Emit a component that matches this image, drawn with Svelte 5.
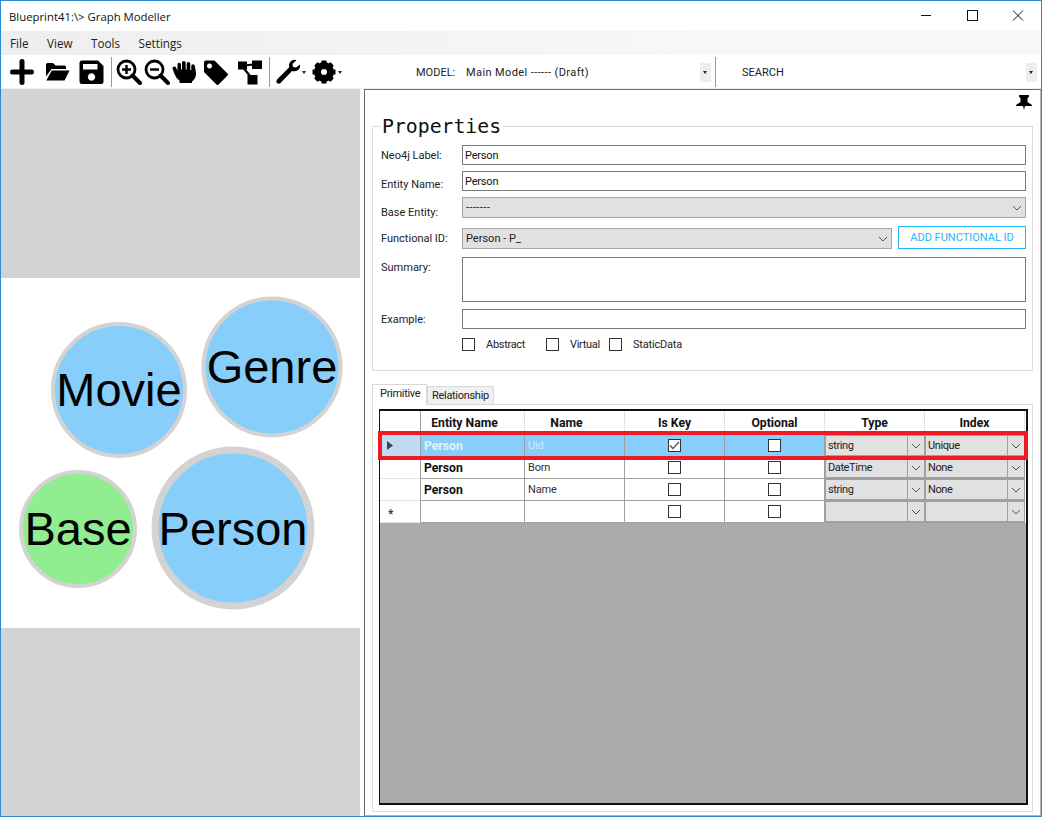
<script>
  const circles = [
    { cx: 119, cy: 112, r: 66, sw: 4, fill: '#87cefa', label: 'Movie', ty: 128 },
    { cx: 272, cy: 89, r: 68.5, sw: 4, fill: '#87cefa', label: 'Genre', ty: 105 },
    { cx: 78, cy: 251, r: 57, sw: 4, fill: '#90ee90', label: 'Base', ty: 267 },
    { cx: 233, cy: 250, r: 78, sw: 7, fill: '#87cefa', label: 'Person', ty: 267 }
  ];
  const rows = [
    { name: 'Uid', key: true, type: 'string', index: 'Unique', sel: true, ent: 'Person' },
    { name: 'Born', key: false, type: 'DateTime', index: 'None', ent: 'Person' },
    { name: 'Name', key: false, type: 'string', index: 'None', ent: 'Person' },
    { name: '', key: false, type: '', index: '', ent: '', add: true }
  ];
  const teeth = [0, 45, 90, 135, 180, 225, 270, 315];
</script>

{#snippet chevron()}
  <svg class="chev" width="10" height="6" viewBox="0 0 10 6"><path d="M1 1l4 4 4-4" fill="none" stroke="#555" stroke-width="1"/></svg>
{/snippet}

{#snippet check(on)}
  <span class="check">
    {#if on}<svg width="11" height="9" viewBox="0 0 11 9"><path d="M1 4.500l3 3 6-6.500" fill="none" stroke="#555" stroke-width="1.400"/></svg>{/if}
  </span>
{/snippet}

<div class="window">
  <header class="title">
    <span class="title-text">Blueprint41:\&gt; Graph Modeller</span>
    <div class="controls">
      <svg width="46" height="30" viewBox="0 0 46 30"><path d="M18 14.500h10" stroke="#111" fill="none"/></svg>
      <svg width="46" height="30" viewBox="0 0 46 30"><rect x="18.500" y="9.500" width="10" height="10" stroke="#111" fill="none"/></svg>
      <svg width="46" height="30" viewBox="0 0 46 30"><path d="M18 9.500l10 10M28 9.500l-10 10" stroke="#111" fill="none"/></svg>
    </div>
  </header>

  <nav class="menu">
    <span>File</span><span>View</span><span>Tools</span><span>Settings</span>
  </nav>

  <div class="toolbar">
    <div class="tools">
      <svg class="ic i-plus" width="26" height="26" viewBox="0 0 26 26"><path d="M12 2.500v21M2.500 13h19" stroke="#000" stroke-width="5" stroke-linecap="round"/></svg>
      <svg class="ic i-open" width="25" height="26" viewBox="0 0 25 26"><path d="M1 5.500Q1 4 2.500 4H8l2.500 2.500H19.500Q21 6.500 21 8V10H6.500L1 17.500ZM6.800 11.500H24.500L19.500 21.500H1.200Z" fill="#000"/></svg>
      <svg class="ic i-save" width="25" height="26" viewBox="0 0 25 26"><path fill-rule="evenodd" d="M3 1.500H19L24.500 7V22.500Q24.500 25 22 25H3Q.5 25 .5 22.500V4Q.5 1.500 3 1.500ZM4 5V10.500H18.500V5ZM12.500 14.300a3.700 3.700 0 1 0 .01 0Z" fill="#000"/></svg>
      <i class="tsep first"></i>
      <svg class="ic i-zin" width="26" height="26" viewBox="0 0 26 26"><circle cx="10.500" cy="10.500" r="8.500" fill="none" stroke="#000" stroke-width="2.800"/><path d="M16.500 16.500L24 24" stroke="#000" stroke-width="4" stroke-linecap="round"/><path d="M10.500 6v9M6 10.500h9" stroke="#000" stroke-width="2.400"/></svg>
      <svg class="ic i-zout" width="26" height="26" viewBox="0 0 26 26"><circle cx="10.500" cy="10.500" r="8.500" fill="none" stroke="#000" stroke-width="2.800"/><path d="M16.500 16.500L24 24" stroke="#000" stroke-width="4" stroke-linecap="round"/><path d="M6 10.500h9" stroke="#000" stroke-width="2.400"/></svg>
      <svg class="ic i-hand" width="25" height="26" viewBox="0 0 25 26"><path d="M.5 9.500Q.5 7.500 2.300 7.500T4.500 9.500L5.500 11.500V5.500Q5.500 3.800 7.200 3.800T9 5.500V10.500H10V3.800Q10 2 11.800 2T13.700 3.800V10.500H14.700V4.800Q14.700 3 16.500 3T18.300 4.800V11H19.300V7Q19.300 5.300 21 5.300T22.800 7L24 13.500Q24.500 19 20 22.500V24H7.500V21.500Q4 19.500 2.500 15Z" fill="#000"/></svg>
      <svg class="ic i-tag" width="26" height="26" viewBox="0 0 26 26"><path fill-rule="evenodd" d="M1 3.500Q1 1.500 3 1.500H11.500L24.500 14.500Q25.500 15.500 24.500 16.500L15.500 25.500Q14.500 26.500 13.500 25.500L1 13ZM6.500 4.500a2.500 2.500 0 1 0 .01 0Z" fill="#000"/></svg>
      <svg class="ic i-graph" width="26" height="26" viewBox="0 0 26 26"><path d="M1 2.500h9v8H1ZM15 1.500h10v8.500H15ZM10.500 16h10v9.500h-10Z" fill="#000"/><path d="M8 6.500L16 5.500M6.500 9L13 17" stroke="#000" stroke-width="2.200" fill="none"/></svg>
      <i class="tsep second"></i>
      <svg class="ic i-wrench" width="26" height="26" viewBox="0 0 26 26"><path d="M25 5.500Q25.500 9 23 11T17 12L5.500 24Q3.500 25.500 2 24T2.500 20L14 8.500Q13.200 5 15.500 2.500T21.500 1L17.500 5 18 8l3 .5Z" fill="#000"/></svg>
      <i class="caret"></i>
      <svg class="ic i-gear" width="25" height="26" viewBox="0 0 25 26">
        <circle cx="12" cy="13" r="6.500" fill="none" stroke="#000" stroke-width="7"/>
        {#each teeth as t}
          <rect x="9.500" y="1.500" width="5" height="5" fill="#000" transform="rotate({t} 12 13)"/>
        {/each}
      </svg>
      <i class="caret"></i>
    </div>
    <div class="model">
      <span class="k">MODEL:</span><span class="v">Main Model ------ (Draft)</span>
      <span class="drop"></span>
    </div>
    <i class="tsep third"></i>
    <div class="search">
      <span>SEARCH</span>
      <span class="drop"></span>
    </div>
  </div>

  <main class="body">
    <section class="canvas">
      <div class="band"></div>
      <svg class="graph" width="359" height="350" viewBox="0 0 359 350">
        {#each circles as c}
          <circle cx={c.cx - 1} cy={c.cy} r={c.r} fill={c.fill} stroke="#d3d3d3" stroke-width={c.sw}/>
          <text x={c.cx - 1} y={c.ty} text-anchor="middle">{c.label}</text>
        {/each}
      </svg>
      <div class="band grow"></div>
    </section>

    <section class="panel">
      <div class="pin">
        <svg width="16" height="15" viewBox="0 0 16 15"><path d="M3 0H13V2L11.500 3V7L16 10V11H9L8 15 7 11H0V10L4.500 7V3L3 2Z" fill="#000"/></svg>
      </div>
      <fieldset class="props">
        <legend>Properties</legend>
        <div class="row r1"><label for="a">Neo4j Label:</label><div id="a" class="input">Person</div></div>
        <div class="row r2"><label for="b">Entity Name:</label><div id="b" class="input">Person</div></div>
        <div class="row r3"><label for="c">Base Entity:</label><div id="c" class="select dashes">-------{@render chevron()}</div></div>
        <div class="row r4"><label for="d">Functional ID:</label><div id="d" class="select">Person - P_{@render chevron()}</div><button>ADD FUNCTIONAL ID</button></div>
        <div class="row r5"><label for="e">Summary:</label><div id="e" class="input area"></div></div>
        <div class="row r6"><label for="f">Example:</label><div id="f" class="input"></div></div>
        <div class="checks">
          {@render check(false)}<span class="cl abs">Abstract</span>
          {@render check(false)}<span class="cl vir">Virtual</span>
          {@render check(false)}<span class="cl sta">StaticData</span>
        </div>
      </fieldset>

      <div class="tabs">
        <span class="tab active">Primitive</span><span class="tab rel">Relationship</span>
      </div>
      <div class="tabbody">
        <div class="grid">
          <div class="tr head">
            <span class="c0"></span><span class="c1">Entity Name</span><span class="c2">Name</span><span class="c3">Is Key</span><span class="c4">Optional</span><span class="c5">Type</span><span class="c6">Index</span>
          </div>
          {#each rows as r}
            <div class="tr data" class:sel={r.sel}>
              <span class="c0">
                {#if r.sel}<svg width="6" height="9" viewBox="0 0 6 9"><path d="M0 0l6 4.500L0 9Z" fill="#444"/></svg>{/if}
                {#if r.add}<b class="star">*</b>{/if}
              </span>
              <span class="c1 ent">{r.ent}</span>
              <span class="c2 nm">{r.name}</span>
              <span class="c3">{@render check(r.key)}</span>
              <span class="c4">{@render check(false)}</span>
              <span class="c5"><span class="cell-sel"><em>{r.type}</em><u>{@render chevron()}</u></span></span>
              <span class="c6"><span class="cell-sel"><em>{r.index}</em><u>{@render chevron()}</u></span></span>
            </div>
          {/each}
          <div class="hilite"></div>
        </div>
      </div>
    </section>
  </main>
</div>

<style>
  :global(body) { margin: 0; background: #fff; }
  .window {
    width: 1042px; height: 817px; box-sizing: border-box; overflow: hidden;
    border: 1px solid #2a8ad4;
    display: flex; flex-direction: column;
    font-family: "Open Sans", "Noto Sans", sans-serif; color: #000; background: #fff;
  }
  .title { height: 30px; flex: none; display: flex; align-items: center; justify-content: space-between; padding-left: 8px; }
  .title-text { font-size: 11.350px; color: #111; }
  .controls { display: flex; height: 30px; }
  .menu {
    height: 24px; flex: none; display: flex; align-items: center; padding-left: 9px; gap: 18.500px;
    background: linear-gradient(90deg, #eeeeee, #f8f8f8 70%); font-size: 11.700px; color: #222;
  }
  .toolbar { height: 34px; flex: none; display: flex; align-items: center; border-bottom: 1px solid #eee; font-size: 11px; box-sizing: border-box; }
  .tools { display: flex; align-items: center; width: 415px; flex: none; }
  .ic { flex: none; }
  .i-plus { margin-left: 9px; }
  .i-open, .i-save { margin-left: 9px; }
  .i-zin { margin-left: 4px; }
  .i-zout { margin-left: 2px; }
  .i-hand { margin-left: 2px; }
  .i-tag { margin-left: 6px; }
  .i-graph { margin-left: 8px; }
  .i-wrench { margin-left: 5px; }
  .i-gear { margin-left: 6px; }
  .tsep { display: block; width: 1px; height: 30px; background: #9a9a9a; flex: none; }
  .tsep.first { margin-left: 7px; }
  .tsep.second { margin-left: 6px; }
  .caret { width: 0; height: 0; border: 2.500px solid transparent; border-top: 3px solid #222; border-bottom: 0; margin: 2px 0 0 1px; flex: none; }
  .model { width: 299px; flex: none; display: flex; align-items: center; font-family: Roboto, sans-serif; font-size: 11px; color: #222; position: relative; top: 1px; }
  .k { width: 50px; }
  .v { flex: 1; letter-spacing: .4px; }
  .drop { width: 11px; height: 19px; background: #eee; position: relative; margin-right: 4px; }
  .drop::after { content: ""; position: absolute; left: 3px; top: 8px; border: 2.500px solid transparent; border-top: 3px solid #222; border-bottom: 0; }
  .search { flex: 1; display: flex; justify-content: space-between; align-items: center; padding-left: 26px; font-family: Roboto, sans-serif; font-size: 11px; color: #222; position: relative; top: 1px; }

  .body { flex: 1; display: flex; min-height: 0; }
  .canvas { width: 359px; flex: none; display: flex; flex-direction: column; margin-right: 4px; }
  .band { height: 189px; flex: none; background: #d3d3d3; }
  .band.grow { flex: 1; height: auto; }
  .graph { display: block; flex: none; }
  .graph text { font-family: "Liberation Sans", Arial, sans-serif; font-size: 47px; fill: #000; }

  .panel {
    flex: 1; min-width: 0; box-sizing: border-box;
    border: 1px solid #b4b4b4; border-left-color: #6a6a6a; border-top-color: #6a6a6a;
    display: flex; flex-direction: column; padding: 0 7px 3px 7px;
    font-family: Roboto, sans-serif; font-size: 11px; color: #222;
  }
  .pin { height: 16px; display: flex; justify-content: flex-end; padding: 5px 0 0; margin-right: 1px; flex: none; }
  .props {
    margin: 4px 0 0; padding: 0 6px 0 8px; height: 256px; box-sizing: border-box; flex: none;
    border: 1px solid #dcdcdc; min-width: 0;
  }
  legend { font-family: "DejaVu Sans Mono", monospace; font-size: 19.800px; color: #111; padding: 0 2px 0 1px; line-height: 23px; height: 23px; }
  .row { display: flex; align-items: flex-start; }
  .row label { width: 81px; flex: none; line-height: 14px; color: #222; }
  .input { flex: 1; height: 18px; border: 1px solid #7a7a7a; line-height: 19px; padding-left: 2px; color: #111; letter-spacing: -.2px; }
  .area { height: 43px; }
  .select {
    flex: 1; height: 19px; border: 1px solid #a8a8a8; background: #e1e1e1; line-height: 20px; padding-left: 3px; position: relative; color: #222;
  }
  .select.dashes { letter-spacing: .4px; }
  .select .chev { position: absolute; right: 3px; top: 7px; }
  .r1 { margin-top: 7px; } .r1 label { padding-top: 4px; }
  .r2 { margin-top: 6px; } .r2 label { padding-top: 7px; }
  .r3 { margin-top: 5px; } .r3 label { padding-top: 9px; }
  .r4 { margin-top: 8px; } .r4 label { padding-top: 4px; }
  .r5 { margin-top: 8px; } .r5 label { padding-top: 4px; }
  .r6 { margin-top: 7px; } .r6 label { padding-top: 4px; }
  button {
    margin: -2px 0 0 6px; width: 128px; height: 23px; flex: none; background: #fff; border: 1px solid #29b6f6; color: #29b6f6;
    font: 11px Roboto, sans-serif; padding: 0;
  }
  .checks { display: flex; align-items: center; padding-left: 81px; margin-top: 8px; height: 14px; }
  .check { width: 11px; height: 11px; border: 1px solid #333; background: #fff; display: inline-flex; align-items: center; justify-content: center; flex: none; }
  .cl { letter-spacing: -.3px; }
  .cl.abs { margin-left: 11px; width: 60px; }
  .cl.vir { margin-left: 11px; width: 39px; }
  .cl.sta { margin-left: 11px; letter-spacing: -.2px; }

  .tabs { display: flex; align-items: flex-end; height: 21px; margin-top: 13px; flex: none; position: relative; z-index: 1; margin-bottom: -1px; }
  .tab { height: 17px; line-height: 18px; box-sizing: content-box; background: #f0f0f0; border: 1px solid #d9d9d9; color: #222; letter-spacing: -.3px; }
  .tab.rel { padding: 0 4px 0 4px; }
  .tab.active { height: 19px; line-height: 18px; padding: 0 7px; width: 39px; background: #fff; border-bottom-color: #fff; }
  .tabbody { flex: 1; min-height: 0; border: 1px solid #dcdcdc; padding: 4px 4px 6px 6px; display: flex; }
  .grid { flex: 1; background: #ababab; border: 1px solid #111; border-width: 2px 2px 2px 1px; position: relative; }
  .tr { display: flex; height: 22px; background: #fff; }
  .tr.head { height: 24px; font-weight: 700; color: #111; font-size: 12.200px; }
  .tr > span { box-sizing: border-box; flex: none; border-right: 1px solid #a0a0a0; border-bottom: 1px solid #a0a0a0; display: flex; align-items: center; }
  .tr > .c0 { width: 41px; padding-left: 7px; border-bottom-color: #e3e3e3; }
  .tr > .c1 { width: 104px; } .tr > .c2 { width: 100px; } .tr > .c3 { width: 100px; } .tr > .c4 { width: 100px; } .tr > .c5 { width: 100px; } .tr > .c6 { width: 100px; }
  .head > span { justify-content: center; border-color: #e3e3e3; }
  .head > .c0 { border-right-color: #a0a0a0; }
  .head > .c1, .head > .c2 { padding-right: 16px; }
  .data > .c3, .data > .c4 { justify-content: center; }
  .data > .c1, .data > .c2 { padding-left: 3px; }
  .ent { font-weight: 700; color: #111; font-size: 12.200px; }
  .nm { color: #333; letter-spacing: -.2px; }
  .sel { background: #87cefa; }
  .sel > .c0 { background: #bddcf3; }
  .sel .ent { color: #e4f1fb; }
  .sel .nm { color: #d7eafa; }
  .star { font-size: 12px; line-height: 10px; color: #333; transform: translate(1px, 2px); }
  .cell-sel { flex: 1; height: 100%; display: flex; background: #e1e1e1; border: 1px solid #a0a0a0; border-width: 1px 1px 2px 1px; box-sizing: border-box; }
  .data > .c5, .data > .c6 { border-right: 0; border-bottom: 0; }
  .cell-sel em { font-style: normal; flex: 1; padding-left: 2px; line-height: 19px; color: #222; letter-spacing: -.4px; }
  .cell-sel u { width: 16px; border-left: 1px solid #a0a0a0; display: flex; align-items: center; justify-content: center; text-decoration: none; }
  .hilite { position: absolute; left: -2px; right: -2px; top: 20px; height: 29px; box-sizing: border-box; border: 4px solid #ed1c24; pointer-events: none; }
</style>
